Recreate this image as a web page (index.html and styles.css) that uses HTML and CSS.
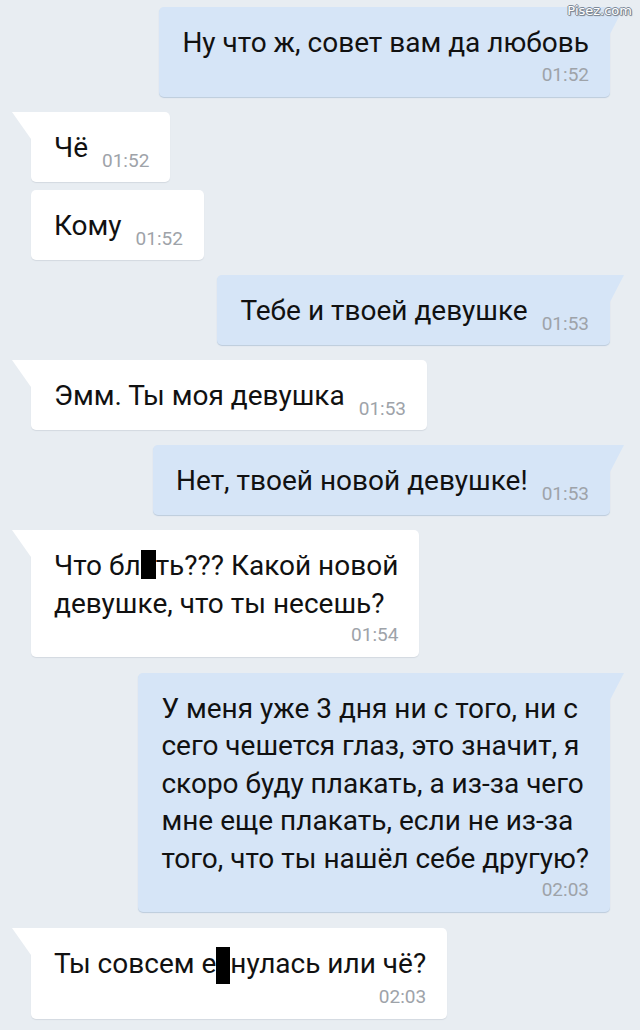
FILE: index.html
```html
<!DOCTYPE html>
<html lang="ru">
<head>
    <meta charset="UTF-8">
    <meta name="viewport" content="width=device-width, initial-scale=1.0">
    <link rel="stylesheet" href="styles.css">
    <title>Переписка</title>
</head>
<body>
    <div class="watermark">Pisez.com</div>

    <div class="chat">
        <div class="msg out tail stack">
            <div class="text">Ну что ж, совет вам да любовь</div>
            <div class="time">01:52</div>
        </div>

        <div class="msg in tail">
            <div class="text">Чё</div>
            <div class="time">01:52</div>
        </div>

        <div class="msg in next">
            <div class="text">Кому</div>
            <div class="time">01:52</div>
        </div>

        <div class="msg out tail">
            <div class="text">Тебе и твоей девушке</div>
            <div class="time">01:53</div>
        </div>

        <div class="msg in tail">
            <div class="text">Эмм. Ты моя девушка</div>
            <div class="time">01:53</div>
        </div>

        <div class="msg out tail">
            <div class="text">Нет, твоей новой девушке!</div>
            <div class="time">01:53</div>
        </div>

        <div class="msg in tail stack">
            <div class="text">Что бл<span class="censor"></span>ть??? Какой новой<br>девушке, что ты несешь?</div>
            <div class="time">01:54</div>
        </div>

        <div class="msg out tail stack">
            <div class="text">У меня уже 3 дня ни с того, ни с<br>сего чешется глаз, это значит, я<br>скоро буду плакать, а из-за чего<br>мне еще плакать, если не из-за<br>того, что ты нашёл себе другую?</div>
            <div class="time">02:03</div>
        </div>

        <div class="msg in tail stack">
            <div class="text">Ты совсем е<span class="censor tall"></span>нулась или чё?</div>
            <div class="time">02:03</div>
        </div>
    </div>
</body>
</html>
```

FILE: styles.css
```css
body {
  margin: 0;
  padding: 0;
  background-color: #e8edf2;
  font-family: Roboto, "Noto Sans", Arial, sans-serif;
  color: #111111;
  height: 1030px;
  overflow: hidden;
}

.watermark {
  position: absolute;
  top: 3px;
  right: 8px;
  z-index: 2;
  font-family: "DejaVu Sans", Verdana, sans-serif;
  font-size: 13px;
  line-height: 15px;
  color: #ffffff;
  text-shadow: 1px 0 0 #7f8b99, -1px 0 0 #7f8b99, 0 1px 0 #7f8b99, 0 -1px 0 #7f8b99, 1px 1px 1px #6c7785;
}

.chat {
  display: flex;
  flex-direction: column;
  align-items: flex-start;
  gap: 15.5px;
  padding: 7px 30px 0 31px;
}

.msg {
  position: relative;
  display: flex;
  align-items: flex-end;
  box-sizing: border-box;
  padding: 17px 21px 12px 23px;
  border-radius: 5px;
}

.msg.in {
  background-color: #ffffff;
  box-shadow: 0 1px 1px #d3d9e0;
}

.msg.out {
  align-self: flex-end;
  background-color: #d6e5f7;
  box-shadow: 0 1px 1px #bccbdc;
}

.msg.next {
  margin-top: -7px;
}

/* the little corner on the first bubble of a group */
.msg.tail::before {
  content: "";
  position: absolute;
  top: 0;
  width: 0;
  height: 0;
  border-top: 27px solid transparent;
}

.msg.in.tail {
  border-top-left-radius: 0;
}

.msg.in.tail::before {
  left: -19px;
  border-top-color: #ffffff;
  border-left: 19px solid transparent;
}

.msg.out.tail {
  border-top-right-radius: 0;
}

.msg.out.tail::before {
  right: -14px;
  border-top-color: #d6e5f7;
  border-right: 14px solid transparent;
}

.text {
  font-size: 28px;
  line-height: 37.5px;
  margin-bottom: 3px;
}

.time {
  font-size: 19px;
  line-height: 18px;
  color: #9ea3a9;
  margin-left: 14px;
  white-space: nowrap;
}

.msg.stack {
  display: block;
}

.msg.stack .time {
  text-align: right;
  margin: 4px 0 1px 0;
}

.censor {
  display: inline-block;
  width: 15px;
  height: 29px;
  background-color: #000000;
  vertical-align: -4px;
}

.censor.tall {
  width: 14px;
  height: 37px;
  vertical-align: -11px;
}
```
